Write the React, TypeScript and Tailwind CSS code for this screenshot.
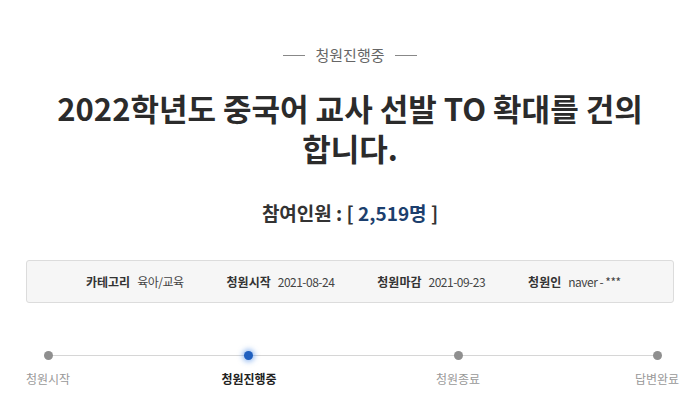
const FONT = "font-['Noto_Sans_CJK_KR','Noto_Sans',sans-serif]";

const info = [
  { label: "카테고리", value: "육아/교육" },
  { label: "청원시작", value: "2021-08-24" },
  { label: "청원마감", value: "2021-09-23" },
  { label: "청원인", value: "naver - ***" },
];

const steps = [
  { name: "청원시작", active: false, dot: "ml-[44px]", label: "ml-[8px]" },
  { name: "청원진행중", active: true, dot: "ml-[191px]", label: "ml-[121px]" },
  { name: "청원종료", active: false, dot: "ml-[201px]", label: "ml-[129px]" },
  { name: "답변완료", active: false, dot: "ml-[190px]", label: "ml-[119px]" },
];

export default function App() {
  return (
    <div className={`w-[700px] h-[400px] overflow-hidden bg-white ${FONT}`}>
      <div className="flex items-center justify-center gap-[10px] pt-[44px] text-[15px] leading-[22px] text-[#666]">
        <span className="block h-px w-[22px] bg-[#888]" />
        <span>청원진행중</span>
        <span className="block h-px w-[22px] bg-[#888]" />
      </div>

      <h1 className="mx-auto mt-[22px] w-[600px] text-center text-[31px] font-bold leading-[40px] text-[#2b2b2b]">
        2022학년도 중국어 교사 선발 TO 확대를 건의합니다.
      </h1>

      <p className="mt-[32px] text-center text-[19px] font-bold leading-[26px] text-[#333]">
        참여인원 : [ <span className="text-[#1c3f6e]">2,519명</span> ]
      </p>

      <div className="mx-[26px] mt-[34px] flex h-[43px] items-center gap-[43px] rounded-[3px] border border-[#dcdcdc] bg-[#f6f6f6] pl-[59px] text-[12px] text-[#444]">
        {info.map((it) => (
          <div key={it.label} className="flex items-center gap-[7px]">
            <span className="font-bold text-[#333]">{it.label}</span>
            <span className="tracking-[-0.5px]">{it.value}</span>
          </div>
        ))}
      </div>

      <div className="relative mt-[48px] flex h-[9px] items-center">
        <div className="absolute left-[48px] right-[43px] top-[4px] h-px bg-[#d6d6d6]" />
        {steps.map((s) => (
          <span
            key={s.name}
            className={
              s.active
                ? `relative block h-[9px] w-[9px] rounded-full bg-[#1f5fbf] shadow-[0_0_5px_2px_rgba(60,130,230,0.5)] ${s.dot}`
                : `relative block h-[9px] w-[9px] rounded-full bg-[#8f8f8f] ${s.dot}`
            }
          />
        ))}
      </div>

      <div className="mt-[10px] flex text-[12px] leading-[18px]">
        {steps.map((s) => (
          <span
            key={s.name}
            className={
              s.active
                ? `w-[80px] text-center font-bold text-[#222] ${s.label}`
                : `w-[80px] text-center text-[#999] ${s.label}`
            }
          >
            {s.name}
          </span>
        ))}
      </div>
    </div>
  );
}
